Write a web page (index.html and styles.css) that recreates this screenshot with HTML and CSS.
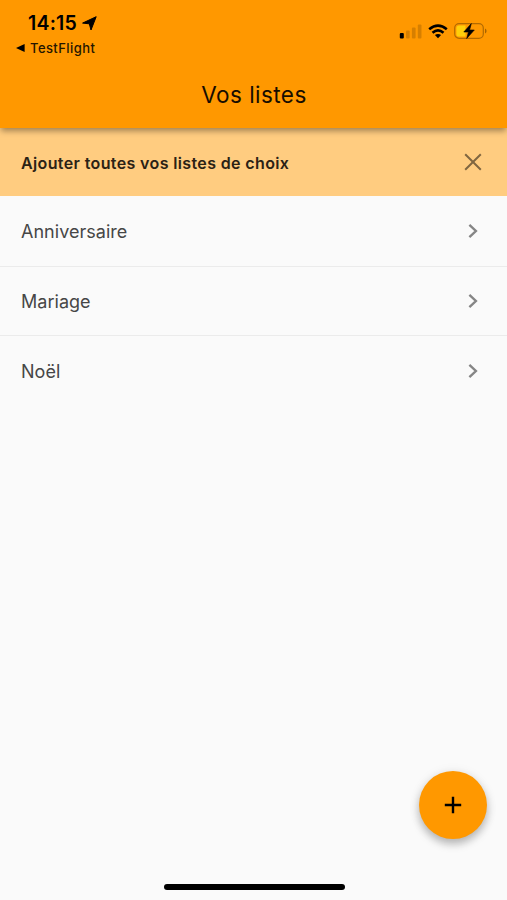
FILE: index.html
```html
<!DOCTYPE html>
<html lang="fr">
<head>
<meta charset="utf-8">
<title>Vos listes</title>
<link rel="stylesheet" href="styles.css">
</head>
<body>
<div class="screen">
  <header class="app-bar">
    <div class="status">
      <div class="status-left">
        <div class="clock"><span class="time">14:15</span>
          <svg class="location" width="17" height="17" viewBox="0 0 17 17"><path d="M15.2 1.7 10 15 8.3 8.8 1.6 8.1Z" stroke="#000" stroke-width="1" stroke-linejoin="round"/></svg>
        </div>
        <div class="back"><svg width="9" height="8" viewBox="0 0 9 8"><path d="M0 4 8.6 0v8Z"/></svg><span class="back-label">TestFlight</span></div>
      </div>
      <div class="status-right">
        <svg width="23" height="15" viewBox="0 0 23 15"><rect x=".8" y="9" width="4" height="5.5" rx="1"/><g fill-opacity=".16"><rect x="7" y="6.5" width="3.7" height="8" rx="1"/><rect x="12.9" y="3.6" width="3.7" height="10.9" rx="1"/><rect x="18.8" y=".6" width="3.7" height="13.9" rx="1"/></g></svg>
        <svg width="20" height="15" viewBox="0 0 20 15"><g fill="none" stroke="#000" stroke-width="2.6"><path d="M1.2 5.2Q10-2.1 18.8 5.2"/><path d="M4.5 8.7Q10 4 15.5 8.7"/></g><path d="M6.9 11.1Q10 8.7 13.1 11.1L10 14.2Z"/></svg>
        <svg width="33" height="18" viewBox="0 0 33 18"><rect x=".7" y="1.7" width="28.6" height="14.6" rx="4.4" fill="none" stroke="#000" stroke-opacity=".3" stroke-width="1.2"/><path d="M5 3.4h6.5v11.2H5a2.6 2.6 0 0 1-2.6-2.6V6A2.6 2.6 0 0 1 5 3.4Z" fill="#ffcf0a"/><path d="M31 6.6q1.6.7 1.6 2.4T31 11.4Z" fill-opacity=".35"/><path d="M17.3 1.6 9.8 10h4.6l-1.7 6.5L20.3 8h-4.7Z" stroke="#000" stroke-width=".6" stroke-linejoin="round"/></svg>
      </div>
    </div>
    <h1 class="title"><span>Vos listes</span></h1>
  </header>
  <main>
    <div class="banner"><span class="banner-text">Ajouter toutes vos listes de choix</span>
      <svg width="18" height="18" viewBox="0 0 18 18"><path d="M1.2 1.2 16.8 16.8M16.8 1.2 1.2 16.8"/></svg>
    </div>
    <ul class="lists">
      <li class="row"><span>Anniversaire</span><svg width="10" height="16" viewBox="0 0 10 16"><path d="M1.4 1.8 7.9 8 1.4 14.2"/></svg></li>
      <li class="row"><span>Mariage</span><svg width="10" height="16" viewBox="0 0 10 16"><path d="M1.4 1.8 7.9 8 1.4 14.2"/></svg></li>
      <li class="row"><span>Noël</span><svg width="10" height="16" viewBox="0 0 10 16"><path d="M1.4 1.8 7.9 8 1.4 14.2"/></svg></li>
    </ul>
  </main>
  <button class="fab" aria-label="Ajouter"><svg width="18" height="18" viewBox="0 0 18 18"><path d="M9 .8v16.4M.8 9h16.4"/></svg></button>
  <div class="home-indicator"></div>
</div>
</body>
</html>
```
FILE: styles.css
```css
* { box-sizing: border-box; }
body { margin: 0; background: #fafafa; font-family: Inter, sans-serif; }
svg { display: block; flex: none; }
.screen { position: relative; display: flex; flex-direction: column; height: 900px; overflow: hidden; }
.app-bar { position: relative; z-index: 1; height: 128px; background: #ff9800; box-shadow: 0 4px 6px -1px rgba(0, 0, 0, .36); }
.status { display: flex; justify-content: space-between; height: 61px; padding: 12px 20px 0 16px; }
.clock { display: flex; align-items: center; gap: 4px; height: 22px; padding-left: 12px; }
.time { font-size: 19.5px; font-weight: 600; letter-spacing: .2px; }
.back { display: flex; align-items: center; gap: 5px; height: 27px; }
.back-label { font-size: 13px; font-weight: 500; letter-spacing: .42px; color: #241500; }
.status-right { display: flex; align-items: center; gap: 6px; height: 38px; }
.title { display: flex; justify-content: center; align-items: center; height: 67px; margin: 0; padding-left: 1px; font-size: 22.5px; font-weight: 400; letter-spacing: .45px; color: #160d00; }
.banner { display: flex; align-items: center; justify-content: space-between; height: 68px; padding: 0 25px 0 21px; background: #ffcc80; }
.banner-text { padding-top: 1px; font-size: 16px; font-weight: 600; letter-spacing: .37px; color: #2b2215; }
.banner svg { fill: none; stroke: #806640; stroke-width: 2; }
.lists { margin: 0; padding: 1px 0 0; list-style: none; }
.row { display: flex; align-items: center; justify-content: space-between; height: 69.6px; padding: 0 29px 0 21px; border-bottom: 1px solid #ebebeb; font-size: 18px; letter-spacing: .03px; color: #464646; }
.row span { padding-top: 1px; }
.row:last-child { border-bottom: 0; }
.row svg { fill: none; stroke: #858585; stroke-width: 2.4; }
.fab { position: absolute; right: 20px; bottom: 61px; display: flex; align-items: center; justify-content: center; width: 68px; height: 68px; padding: 0; border: 0; border-radius: 50%; background: #ff9800; box-shadow: 0 5px 8px rgba(0, 0, 0, .25), 0 1px 12px rgba(0, 0, 0, .08); }
.fab svg { stroke: #000; stroke-width: 2.4; }
.home-indicator { width: 181px; height: 6px; margin: auto auto 10px 163.5px; border-radius: 3px; background: #000; }
```
